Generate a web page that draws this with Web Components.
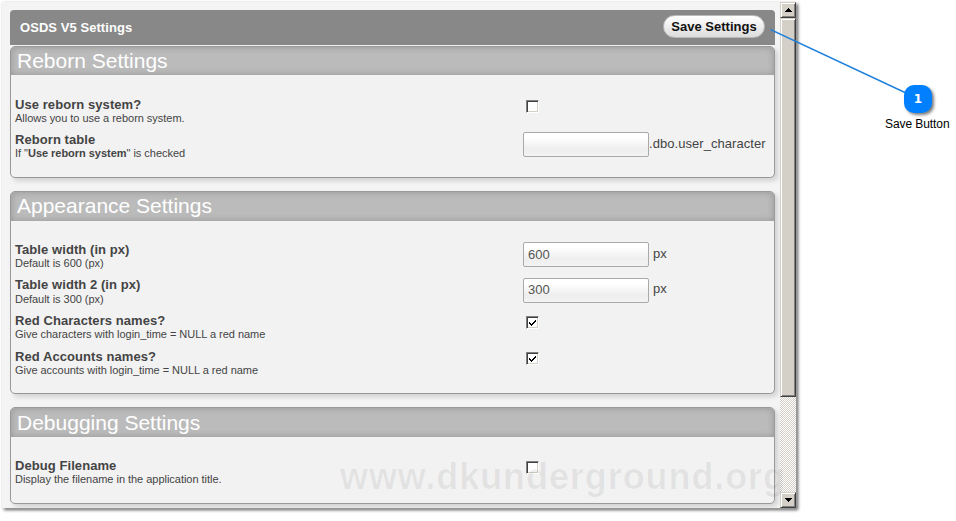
<!DOCTYPE html>
<html lang="en"><head><meta charset="utf-8"><title>OSDS V5 Settings</title>
<style>
html,body{margin:0;background:#fff}
body{width:956px;height:521px;overflow:hidden;position:relative;font-family:"Liberation Sans",Arial,sans-serif;color:#444}
</style></head><body>
<app-window>
<title-bar heading="OSDS V5 Settings"><pill-button>Save Settings</pill-button></title-bar>
<settings-panel heading="Reborn Settings" style="height:132px;margin-top:0;--head:28px;--pad:22px">
<setting-row heading="Use reborn system?" style="height:35px">Allows you to use a reborn system.<check-box slot="field"></check-box></setting-row>
<setting-row heading="Reborn table" style="height:35px">If "<b>Use reborn system</b>" is checked<text-field slot="field" suffix=".dbo.user_character" style="--gap:0px"></text-field></setting-row>
</settings-panel>
<settings-panel heading="Appearance Settings" style="height:203px">
<setting-row heading="Table width (in px)" style="height:35px">Default is 600 (px)<text-field slot="field" value="600" suffix="px"></text-field></setting-row>
<setting-row heading="Table width 2 (in px)" style="height:36px;--top:1px;--desc:14px">Default is 300 (px)<text-field slot="field" value="300" suffix="px" style="--line:22px"></text-field></setting-row>
<setting-row heading="Red Characters names?" style="height:36px">Give characters with login_time = NULL a red name<check-box slot="field" checked></check-box></setting-row>
<setting-row heading="Red Accounts names?" style="height:36px">Give accounts with login_time = NULL a red name<check-box slot="field" checked></check-box></setting-row>
</settings-panel>
<settings-panel heading="Debugging Settings" style="height:97px;--line:29px">
<setting-row heading="Debug Filename" style="height:35px">Display the filename in the application title.<check-box slot="field"></check-box></setting-row>
</settings-panel>
</app-window>
<water-mark>www.dkunderground.org</water-mark>
<call-out number="1">Save Button</call-out>
<script>
const define=(name,html)=>{
  const t=document.createElement('template');t.innerHTML=html;
  customElements.define(name,class extends HTMLElement{
    constructor(){super();this.attachShadow({mode:'open'}).append(t.content.cloneNode(true));}
    connectedCallback(){
      this.shadowRoot.querySelectorAll('[data-attr]').forEach(e=>{e.textContent=this.getAttribute(e.dataset.attr)||''});
    }
  });
};
define('scroll-bar',`<style>
:host{display:flex;flex-direction:column;width:16px;background:repeating-conic-gradient(#d4d0c8 0 25%,#fff 0 50%) 0 0/2px 2px}
.b{box-sizing:border-box;background:#d4d0c8;border:1px solid;border-color:#d4d0c8 #404040 #404040 #d4d0c8;box-shadow:inset 1px 1px #fff,inset -1px -1px #808080}
.a{height:16px;display:flex;align-items:center;justify-content:center}
.t{height:379px}.s{flex:1}svg{display:block}
</style><div class="b a"><svg width="7" height="4" shape-rendering="crispEdges"><path d="M3 0h1v1h1v1h1v1h1v1H0V3h1V2h1V1h1z"/></svg></div><div class="b t"></div><div class="s"></div><div class="b a"><svg width="7" height="4" shape-rendering="crispEdges"><path d="M0 0h7v1H6v1H5v1H4v1H3V3H2V2H1V1H0z"/></svg></div>`);
define('app-window',`<style>
:host{display:flex;box-sizing:border-box;width:794px;height:506px;margin:2px 0 0 2px;background:#f4f4f4;box-shadow:0 0 2px #ddd,2px 2px 3px rgba(0,0,0,.65)}
main{flex:1;padding:8px 5px 0 8px;overflow:hidden;min-width:0}
</style><main><slot></slot></main><scroll-bar></scroll-bar>`);
define('title-bar',`<style>
:host{display:flex;box-sizing:border-box;height:35px;margin-bottom:1px;padding:0 10px;align-items:center;justify-content:space-between;background:#888;border-radius:4px 4px 0 0;color:#fff}
h1{font-size:13px;margin:0;line-height:15px;letter-spacing:.06px}
</style><h1 data-attr="heading"></h1><slot></slot>`);
define('pill-button',`<style>
:host{display:block;box-sizing:border-box;width:102px;height:23px;margin-top:-2px;border:1px solid #bbb;border-radius:12px;background:linear-gradient(#fff,#dcdcdc);color:#111;font-weight:bold;font-size:13px;line-height:21px;text-align:center;white-space:nowrap}
</style><slot></slot>`);
define('settings-panel',`<style>
:host{display:block;box-sizing:border-box;margin-top:13px;border:1px solid #999;border-radius:5px;background:#f2f2f2;box-shadow:3px 3px 5px rgba(0,0,0,.14)}
h2{margin:0;height:var(--head,29px);box-sizing:border-box;padding:0 0 0 6px;border-radius:4px 4px 0 0;background:#bbb;box-shadow:inset 0 0 7px rgba(0,0,0,.2);font:21px/var(--line,27px) "Liberation Sans",Arial,sans-serif;color:#fff}
.c{padding:var(--pad,21px) 4px 0;--line:23px}
</style><h2 data-attr="heading"></h2><div class="c"><slot></slot></div>`);
define('setting-row',`<style>
:host{display:grid;grid-template-columns:508px 1fr;align-items:start}
h3{margin:0;font-size:13px;line-height:15px;letter-spacing:.07px;white-space:nowrap}
p{margin:0;font-size:11px;line-height:var(--desc,13px);letter-spacing:-.03px;white-space:nowrap}
.f{padding-top:var(--top,0px)}
</style><div><h3 data-attr="heading"></h3><p><slot></slot></p></div><div class="f"><slot name="field"></slot></div>`);
define('check-box',`<style>
:host{display:block;padding:3px 0 0 3px}
div{box-sizing:border-box;width:13px;height:13px;background:#fff;border:1px solid;border-color:#808080 #fff #fff #808080;box-shadow:inset 1px 1px #404040,inset -1px -1px #d4d0c8}
svg{display:none}:host([checked]) svg{display:block}
</style><div><svg width="11" height="11" shape-rendering="crispEdges"><path d="M2 5h1v1h1v1h1V6h1V5h1V4h1V3h1v2H8v1H7v1H6v1H5v1H4V8H3V7H2z" fill="#000"/></svg></div>`);
define('text-field',`<style>
:host{display:flex;font-size:13px}
div{box-sizing:border-box;width:126px;height:25px;padding-left:4px;border:1px solid #aaa;border-radius:2px;background:linear-gradient(#fff 20%,#eee 70%,#f3f3f3);color:#555;line-height:var(--line,23px)}
span{margin-left:var(--gap,4px);line-height:var(--line,23px);letter-spacing:.05px;white-space:nowrap}
</style><div data-attr="value"></div><span data-attr="suffix"></span>`);
define('water-mark',`<style>
:host{position:absolute;left:340px;top:457px;font:bold 36px/40px "Liberation Sans",Arial,sans-serif;color:rgba(0,0,0,.06);white-space:nowrap;letter-spacing:.92px}
</style><slot></slot>`);
define('call-out',`<style>
:host{position:absolute;left:770px;top:29px;width:186px;height:110px;font-size:12px;color:#000}
svg{position:absolute;left:0;top:0}
.n{position:absolute;left:134px;top:56px;width:28px;height:28px;border-radius:10px;background:#0080ff;box-shadow:2px 2px 3px rgba(0,0,0,.5);color:#fff;font:bold 12px/29px "DejaVu Sans",sans-serif;text-align:center}
.l{position:absolute;left:115px;top:88px;line-height:14px;letter-spacing:-.08px;white-space:nowrap}
</style><svg width="140" height="66"><path d="M.5.5L136 64" stroke="#2080dc" stroke-width="1.4"/></svg><div class="n" data-attr="number"></div><div class="l"><slot></slot></div>`);
</script></body></html>
